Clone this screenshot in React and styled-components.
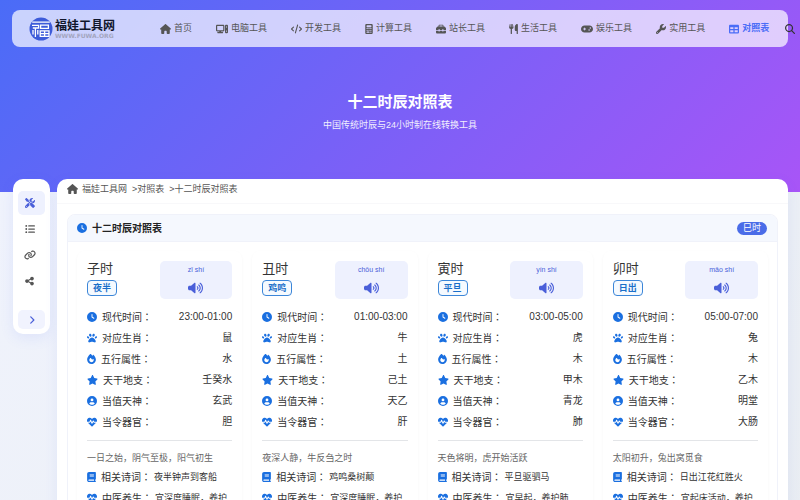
import styled, { createGlobalStyle } from "styled-components";
import {
  FaAngleRight,
  FaBook,
  FaCalculator,
  FaCircleUser,
  FaClock,
  FaCode,
  FaComputer,
  FaFire,
  FaGamepad,
  FaHeartPulse,
  FaHouse,
  FaLink,
  FaListUl,
  FaMagnifyingGlass,
  FaPaw,
  FaScrewdriverWrench,
  FaShareNodes,
  FaStar,
  FaTable,
  FaToolbox,
  FaUtensils,
  FaVolumeHigh,
  FaWrench,
} from "react-icons/fa6";

const navItems = [
  { icon: FaHouse, width: 11, text: "首页" },
  { icon: FaComputer, width: 12, text: "电脑工具" },
  { icon: FaCode, width: 11, text: "开发工具" },
  { icon: FaCalculator, width: 8, text: "计算工具" },
  { icon: FaToolbox, width: 10, text: "站长工具" },
  { icon: FaUtensils, width: 9, text: "生活工具" },
  { icon: FaGamepad, width: 12, text: "娱乐工具" },
  { icon: FaWrench, width: 10, text: "实用工具" },
  { icon: FaTable, width: 10, text: "对照表", active: true },
];

const sideItems = [
  { icon: FaScrewdriverWrench, width: 10, label: "工具", active: true },
  { icon: FaListUl, width: 10, label: "目录" },
  { icon: FaLink, width: 12, label: "链接" },
  { icon: FaShareNodes, width: 9, label: "分享" },
];

const fields = [
  { key: "time", icon: FaClock, width: 10, label: "现代时间" },
  { key: "animal", icon: FaPaw, width: 10, label: "对应生肖" },
  { key: "element", icon: FaFire, width: 9, label: "五行属性" },
  { key: "stem", icon: FaStar, width: 11, label: "天干地支" },
  { key: "god", icon: FaCircleUser, width: 10, label: "当值天神" },
  { key: "organ", icon: FaHeartPulse, width: 10, label: "当令器官" },
];

const hours = [
  {
    name: "子时",
    alias: "夜半",
    pinyin: "zǐ shí",
    time: "23:00-01:00",
    animal: "鼠",
    element: "水",
    stem: "壬癸水",
    god: "玄武",
    organ: "胆",
    desc: "一日之始，阴气至极，阳气初生",
    poem: "夜半钟声到客船",
    health: "宜深度睡眠，养护胆经",
  },
  {
    name: "丑时",
    alias: "鸡鸣",
    pinyin: "chǒu shí",
    time: "01:00-03:00",
    animal: "牛",
    element: "土",
    stem: "己土",
    god: "天乙",
    organ: "肝",
    desc: "夜深人静，牛反刍之时",
    poem: "鸡鸣桑树颠",
    health: "宜深度睡眠，养护肝经",
  },
  {
    name: "寅时",
    alias: "平旦",
    pinyin: "yín shí",
    time: "03:00-05:00",
    animal: "虎",
    element: "木",
    stem: "甲木",
    god: "青龙",
    organ: "肺",
    desc: "天色将明，虎开始活跃",
    poem: "平旦驱驷马",
    health: "宜早起，养护肺",
  },
  {
    name: "卯时",
    alias: "日出",
    pinyin: "mǎo shí",
    time: "05:00-07:00",
    animal: "兔",
    element: "木",
    stem: "乙木",
    god: "明堂",
    organ: "大肠",
    desc: "太阳初升，兔出窝觅食",
    poem: "日出江花红胜火",
    health: "宜起床活动，养护大肠",
  },
];

const LogoMark = () => (
  <svg width="24" height="24" viewBox="0 0 24 24" aria-hidden="true">
    <circle cx="12" cy="12" r="11.5" fill="#3d5bd9" />
    <g fill="none" stroke="#fff" strokeWidth="1.3">
      <path d="M3.2 5.2H20.8M3 8.4H9.6V11H3.8M6.4 11V20M4 13V17.5M8.8 13V17.5" />
      <path d="M11.6 8.2H19.4V11.4H11.6Z" />
      <path d="M11.2 13.8H20V19.4H11.2ZM15.6 13.8V19.4M11.2 16.6H20" />
    </g>
  </svg>
);

const Icon = ({ icon: Glyph, width = 10, height = 10 }) => (
  <IconBox $width={width} $height={height}>
    <Glyph />
  </IconBox>
);

const HourCard = ({ hour }) => (
  <Card>
    <CardTop>
      <div>
        <HourName>{hour.name}</HourName>
        <Alias>{hour.alias}</Alias>
      </div>
      <Speech>
        <Pinyin>{hour.pinyin}</Pinyin>
        <SpeakButton aria-label={`朗读${hour.name}`}>
          <Icon icon={FaVolumeHigh} width={15} height={12} />
        </SpeakButton>
      </Speech>
    </CardTop>
    <Rows>
      {fields.map(({ key, icon, width, label }) => (
        <Row key={key}>
          <Icon icon={icon} width={width} />
          <dt>
            {label}
            <Colon>：</Colon>
          </dt>
          <Value>{hour[key]}</Value>
        </Row>
      ))}
    </Rows>
    <Desc>{hour.desc}</Desc>
    <Rows>
      <Row>
        <Icon icon={FaBook} width={9} />
        <dt>
          相关诗词<Colon>：</Colon>
        </dt>
        <Note>{hour.poem}</Note>
      </Row>
      <Row>
        <Icon icon={FaHeartPulse} />
        <dt>
          中医养生<Colon>：</Colon>
        </dt>
        <Note>{hour.health}</Note>
      </Row>
    </Rows>
  </Card>
);

const App = () => (
  <>
    <GlobalStyle />
    <Hero>
      <Header>
        <Logo href="#">
          <LogoMark />
          <div>
            <LogoName>福娃工具网</LogoName>
            <LogoUrl>WWW.FUWA.ORG</LogoUrl>
          </div>
        </Logo>
        <Nav>
          {navItems.map(({ icon, width, text, active }) => (
            <NavLink key={text} href="#" $active={active}>
              <Icon icon={icon} width={width} />
              {text}
            </NavLink>
          ))}
        </Nav>
        <SearchButton aria-label="搜索">
          <Icon icon={FaMagnifyingGlass} />
        </SearchButton>
      </Header>
      <Title>十二时辰对照表</Title>
      <SubTitle>中国传统时辰与24小时制在线转换工具</SubTitle>
    </Hero>
    <Layout>
      <Sidebar>
        {sideItems.map(({ icon, width, label, active }) => (
          <SideButton key={label} aria-label={label} $active={active}>
            <Icon icon={icon} width={width} />
          </SideButton>
        ))}
        <ToggleButton aria-label="展开">
          <Icon icon={FaAngleRight} />
        </ToggleButton>
      </Sidebar>
      <Main>
        <Breadcrumb>
          <Icon icon={FaHouse} width={11} />
          <HomeLink href="#">福娃工具网</HomeLink>
          <Separator>&gt;</Separator>
          <a href="#">对照表</a>
          <Separator>&gt;</Separator>
          <span>十二时辰对照表</span>
        </Breadcrumb>
        <Panel>
          <PanelHeader>
            <Icon icon={FaClock} />
            <PanelTitle>十二时辰对照表</PanelTitle>
            <CurrentHour>巳时</CurrentHour>
          </PanelHeader>
          <CardGrid>
            {hours.map((hour) => (
              <HourCard key={hour.name} hour={hour} />
            ))}
          </CardGrid>
        </Panel>
      </Main>
    </Layout>
  </>
);

const GlobalStyle = createGlobalStyle`
  * {
    box-sizing: border-box;
  }

  body {
    margin: 0;
    background: linear-gradient(135deg, #f1f4fe 0%, #e9edf2 100%);
    color: #333;
    font-family: "Liberation Sans", "Noto Sans CJK SC", sans-serif;
    font-size: 10px;
    line-height: 15px;
    overflow-x: hidden;
  }

  a {
    color: inherit;
    text-decoration: none;
  }

  button {
    border: none;
    padding: 0;
    background: none;
    font: inherit;
    cursor: pointer;
  }

  h1, h2, h3, p, dl, dt, dd {
    margin: 0;
    font-weight: 400;
  }

  svg {
    display: block;
    flex-shrink: 0;
  }
`;

const IconBox = styled.span`
  display: block;
  flex-shrink: 0;

  svg {
    width: ${(props) => props.$width}px;
    height: ${(props) => props.$height}px;
  }
`;

const Hero = styled.header`
  height: 192px;
  padding: 10px 12px 0;
  background: linear-gradient(135deg, #4a6cf7 0%, #a855f7 100%);
  color: white;
  text-align: center;
`;

const Header = styled.div`
  display: flex;
  align-items: center;
  height: 37px;
  padding-left: 17px;
  border-radius: 8px;
  background: rgba(255, 255, 255, 0.7);
`;

const Logo = styled.a`
  display: flex;
  align-items: center;
  gap: 2px;
  flex-shrink: 0;
  margin-right: 45px;
  text-align: left;
`;

const LogoName = styled.div`
  color: #10162b;
  font-size: 12px;
  font-weight: 700;
  line-height: 14px;
`;

const LogoUrl = styled.div`
  color: #a3a5bf;
  font-family: "DejaVu Sans", sans-serif;
  font-size: 6px;
  font-weight: 700;
  line-height: 6px;
`;

const Nav = styled.nav`
  display: flex;
  flex-shrink: 0;
  gap: 24px;
`;

const NavLink = styled.a`
  display: flex;
  align-items: center;
  gap: 3px;
  color: ${(props) => (props.$active ? "#4a6cf7" : "#555")};
  font-size: 9px;
  font-weight: ${(props) => (props.$active ? 700 : 400)};
  white-space: nowrap;
`;

const SearchButton = styled.button`
  flex-shrink: 0;
  margin-left: 16px;
  color: #333;
`;

const Title = styled.h1`
  margin-top: 44px;
  font-size: 15px;
  font-weight: 700;
  line-height: 22px;
`;

const SubTitle = styled.p`
  margin-top: 5px;
  font-size: 9px;
  opacity: 0.9;
`;

const Layout = styled.div`
  display: flex;
  align-items: flex-start;
  gap: 7px;
  margin-top: -13px;
  padding: 0 12px 20px 13px;
`;

const Sidebar = styled.aside`
  display: flex;
  flex-direction: column;
  align-items: center;
  gap: 2px;
  flex-shrink: 0;
  width: 37px;
  padding: 12px 0 5px;
  border-radius: 10px;
  background: white;
  box-shadow: 0 4px 14px rgba(74, 108, 247, 0.1);
`;

const SideButton = styled.button`
  display: flex;
  align-items: center;
  justify-content: center;
  width: 27px;
  height: 24px;
  padding-right: 4px;
  border-radius: 5px;
  background: ${(props) => (props.$active ? "#eef1fe" : "transparent")};
  color: ${(props) => (props.$active ? "#4a5fd9" : "#555")};
`;

const ToggleButton = styled(SideButton)`
  height: 19px;
  margin-top: 15px;
  padding-right: 0;
  background: #f1f3fe;
  color: #4a5fd9;
`;

const Main = styled.main`
  flex: 1;
  min-width: 0;
  padding-bottom: 10px;
  border-radius: 10px;
  background: white;
  box-shadow: 0 4px 14px rgba(74, 108, 247, 0.08);
`;

const Breadcrumb = styled.nav`
  display: flex;
  align-items: center;
  height: 25px;
  padding: 0 10px 4px;
  border-bottom: 1px solid #f8f8fa;
  color: #555;
  font-size: 9px;
`;

const HomeLink = styled.a`
  margin-left: 4px;
`;

const Separator = styled.span`
  margin-left: 5px;
`;

const Panel = styled.section`
  margin: 10px 10px 0;
  border: 1px solid #f0f2fa;
  border-radius: 8px;
  overflow: hidden;
`;

const PanelHeader = styled.div`
  display: flex;
  align-items: center;
  gap: 5px;
  height: 27px;
  padding: 0 10px 0 9px;
  border-bottom: 1px solid #f0f2fa;
  background: #f5f8fe;
  color: #1a6fe0;
`;

const PanelTitle = styled.h2`
  flex: 1;
  color: #222;
  font-size: 10px;
  font-weight: 700;
`;

const CurrentHour = styled.span`
  padding: 0 6px;
  border-radius: 7px;
  background: #4a6ce8;
  color: white;
  font-size: 9px;
  line-height: 13px;
`;

const CardGrid = styled.div`
  display: grid;
  grid-template-columns: repeat(4, 1fr);
  gap: 10px;
  padding: 9px;
`;

const Card = styled.article`
  min-width: 0;
  padding: 10px;
  border-radius: 8px;
  box-shadow: 0 1px 3px rgba(0, 0, 0, 0.04);
`;

const CardTop = styled.div`
  display: grid;
  grid-template-columns: 1fr 1fr;
  margin-bottom: 7px;
`;

const HourName = styled.h3`
  font-size: 13px;
  line-height: 16px;
`;

const Alias = styled.span`
  display: inline-block;
  margin-top: 3px;
  padding: 0 5px;
  border: 1px solid #3c86d8;
  border-radius: 4px;
  background: #f5faff;
  color: #1a6fc9;
  font-size: 9px;
  font-weight: 700;
  line-height: 14px;
`;

const Speech = styled.div`
  display: flex;
  flex-direction: column;
  align-items: center;
  gap: 6px;
  height: 38px;
  padding-top: 3px;
  border-radius: 5px;
  background: #eef1fe;
  color: #4a5fd9;
`;

const Pinyin = styled.span`
  font-size: 7px;
  line-height: 12px;
`;

const SpeakButton = styled.button`
  color: inherit;
`;

const Rows = styled.dl`
  display: flex;
  flex-direction: column;
`;

const Row = styled.div`
  display: flex;
  align-items: center;
  height: 21px;
  white-space: nowrap;

  ${IconBox} {
    margin-right: 5px;
    color: #1a6fe0;
  }
`;

const Colon = styled.span`
  font-family: "Noto Sans CJK JP", sans-serif;
`;

const Value = styled.dd`
  flex: 1;
  text-align: right;
`;

const Note = styled.dd`
  flex: 1;
  align-self: flex-start;
  margin-left: 3px;
  font-size: 9px;
  line-height: 23px;
  white-space: normal;
`;

const Desc = styled.p`
  margin-top: 8px;
  padding-top: 10px;
  border-top: 1px solid #e3e5e8;
  color: #666;
  font-size: 9px;
  white-space: nowrap;
`;

export default App;
